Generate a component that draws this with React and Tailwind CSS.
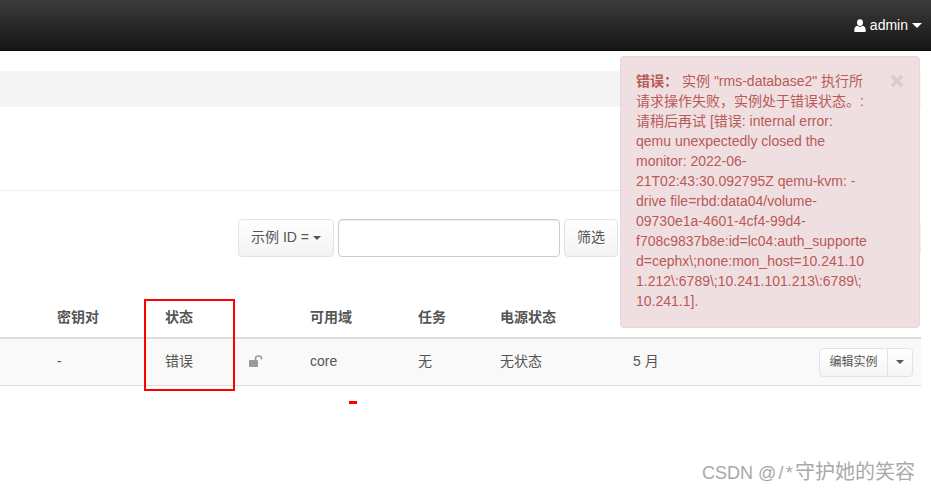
import React from "react";

const Caret = ({ className = "" }) => (
  <span className={"inline-block w-0 h-0 border-x-[4px] border-x-transparent border-t-[4px] " + className} />
);

const User = () => (
  <svg width="12" height="13" viewBox="0 0 12 13" fill="#fff">
    <ellipse cx="6" cy="3.6" rx="3" ry="3.4" />
    <path d="M0.2 12.2C0.1 8.8 1.4 7 3.4 6.7 4 7.4 5 7.8 6 7.8s2-.4 2.6-1.1c2 .3 3.3 2.1 3.2 5.5-.1.5-.5.8-1 .8H1.2c-.5 0-.9-.3-1-.8z" />
  </svg>
);

const Lock = () => (
  <svg width="14" height="12" viewBox="0 0 14 12">
    <rect x="0" y="5" width="9" height="7" rx="0.8" fill="#999" />
    <path d="M6.5 5V3.2C6.5 1.8 7.6 1 9.5 1S12.5 1.8 12.5 3.2V4.5" fill="none" stroke="#999" strokeWidth="1.6" />
  </svg>
);

const Close = () => (
  <svg width="14" height="14" viewBox="0 0 14 14">
    <path d="M2 2L12 12M12 2L2 12" stroke="#e5c6c9" strokeWidth="3.6" strokeLinecap="butt" />
  </svg>
);

const lines = [
  '请求操作失败\uFF0C实例处于错误状态。:',
  '请稍后再试 [错误: internal error:',
  'qemu unexpectedly closed the',
  'monitor: 2022-06-',
  '21T02:43:30.092795Z qemu-kvm: -',
  'drive file=rbd:data04/volume-',
  '09730e1a-4601-4cf4-99d4-',
  'f708c9837b8e:id=lc04:auth_supporte',
  'd=cephx\\;none:mon_host=10.241.10',
  '1.212\\:6789\\;10.241.101.213\\:6789\\;',
  '10.241.1].',
];

export default function App() {
  return (
    <div className="relative w-[931px] h-[492px] overflow-hidden bg-white text-[14px] text-[#555] font-['Liberation_Sans','Noto_Sans_CJK_SC',sans-serif]">
      <header className="h-[51px] bg-gradient-to-b from-[#3c3c3c] to-[#161616] border-b border-[#0a0a0a] flex items-center justify-end pr-[9px] text-white text-[14px] gap-[4px]">
        <User />
        <span>admin</span>
        <Caret className="border-t-white border-x-[5px] border-t-[5px]" />
      </header>

      <main className="w-[921px]">
        <div className="mt-[20px] h-[36px] bg-[#f5f5f5]" />
        <div className="mt-[83px] border-t border-[#eeeeee]" />

        <div className="mt-[28px] flex items-stretch h-[38px] pl-[238px] gap-[4px]">
          <button className="w-[96px] pb-[1px] rounded-[4px] border border-[#e3e3e3] bg-gradient-to-b from-white to-[#f3f3f3] flex items-center justify-center gap-[4px] text-[#555]">
            <span>示例 ID =</span>
            <Caret className="border-t-[#555]" />
          </button>
          <div className="w-[222px] rounded-[4px] border border-[#cccccc] bg-white shadow-[inset_0_1px_1px_rgba(0,0,0,0.075)]" />
          <button className="w-[54px] pb-[1px] rounded-[4px] border border-[#e3e3e3] bg-gradient-to-b from-white to-[#f3f3f3] text-[#555]">筛选</button>
          <div className="flex-1 flex justify-end">
            <div className="w-[40px] h-[36px] mt-[1px] rounded-r-[4px] border border-[#eeeeee]" />
          </div>
        </div>

        <div className="mt-[44px] grid grid-cols-[57px_108px_84px_61px_108px_82px_133px_1fr] items-center h-[38px] pb-[3px] font-bold border-b-[2px] border-[#dddddd]">
          <span />
          <span>密钥对</span>
          <span>状态</span>
          <span />
          <span>可用域</span>
          <span>任务</span>
          <span>电源状态</span>
          <span />
        </div>

        <div className="grid grid-cols-[57px_108px_84px_61px_108px_82px_133px_1fr] items-center h-[47px] pb-[2px] bg-[#f9f9f9] border-b border-[#dddddd]">
          <span />
          <span>-</span>
          <span>错误</span>
          <span className="flex"><Lock /></span>
          <span>core</span>
          <span>无</span>
          <span>无状态</span>
          <span className="flex items-center justify-between pr-[8px]">
            <span>5 月</span>
            <span className="flex h-[29px] translate-y-[1px] rounded-[4px] border border-[#e3e3e3] bg-gradient-to-b from-white to-[#f5f5f5] text-[12px]">
              <span className="w-[68px] flex items-center justify-center border-r border-[#e3e3e3]">编辑实例</span>
              <span className="w-[24px] flex items-center justify-center"><Caret className="border-t-[#555]" /></span>
            </span>
          </span>
        </div>
      </main>

      <div className="absolute left-[620px] top-[56px] w-[300px] h-[272px] rounded-[4px] border border-[#ebd5d8] bg-[#f0dfe1] text-[#b85a58] text-[14px] leading-[20px] pl-[15px] pt-[14px]">
        <p className="whitespace-nowrap">
          <strong className="font-bold mr-[4px]">{'错误\uFF1A'}</strong>
          实例 "rms-database2" 执行所
        </p>
        {lines.map((line) => (
          <p key={line} className="whitespace-nowrap">{line}</p>
        ))}
        <span className="absolute left-[269px] top-[17px] flex"><Close /></span>
      </div>

      <div className="absolute left-[144px] top-[299px] w-[91px] h-[92px] border-[2px] border-[#ff0000]" />
      <div className="absolute left-[349px] top-[401px] w-[8px] h-[3px] bg-[#ff0000]" />
      <div className="absolute left-[702px] top-[461px] text-[18px] leading-[22px] text-[#a9a9a9] whitespace-nowrap">
        CSDN <span className="tracking-[2.2px]">@/*</span><span className="text-[20px]">守护她的笑容</span>
      </div>
    </div>
  );
}
